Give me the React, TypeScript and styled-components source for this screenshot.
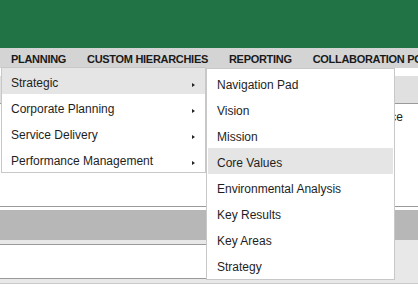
import React from "react";
import styled, { createGlobalStyle } from "styled-components";

const GlobalStyle = createGlobalStyle`
  body {
    margin: 0;
    font-family: "Liberation Sans", Arial, sans-serif;
    color: #1e1e1e;
  }
`;

const Page = styled.div`
  position: relative;
  width: 418px;
  height: 300px;
  overflow: hidden;
  background: #fff;
`;

const Header = styled.header`
  height: 48px;
  background: #217346;
`;

const NavBar = styled.nav`
  display: flex;
  align-items: center;
  height: 20px;
  background: #d4d4d4;
  white-space: nowrap;
`;

const NavItem = styled.span`
  padding: 1px 10px 0 11px;
  font-size: 11px;
  font-weight: bold;
  letter-spacing: -0.3px;
  color: #1a1a1a;
`;

const NavSep = styled.span`
  width: 1px;
  height: 14px;
  background: #333;
`;

const TopGap = styled.div`
  height: 8px;
`;

const GridHeader = styled.div`
  height: 27px;
  background: #e0e0e0;
  border-bottom: 1px solid #9a9a9a;
`;

const DataRow = styled.div`
  display: flex;
  justify-content: flex-end;
  height: 103px;
  padding: 6px 15px 0 0;
  box-sizing: border-box;
  font-size: 12px;
  border-bottom: 1px solid #9a9a9a;
`;

const BandGap = styled.div`
  height: 3px;
`;

const GrayBand = styled.div`
  height: 30px;
  background: #b7b7b7;
`;

const Lower = styled.div`
  display: flex;
  height: 43px;
  background: #e8e8e8;
  border-bottom: 1px solid #cacaca;
`;

const LeftPanel = styled.div`
  width: 367px;
  height: 33px;
  margin-top: 4px;
  background: #fff;
  border-top: 1px solid #9a9a9a;
  border-bottom: 1px solid #9a9a9a;
`;

const Menu = styled.ul<{ $left: number; $top: number; $width: number }>`
  position: absolute;
  left: ${(p) => p.$left}px;
  top: ${(p) => p.$top}px;
  width: ${(p) => p.$width}px;
  margin: 0;
  padding: 0;
  list-style: none;
  background: #fff;
  border: 1px solid #c8c8c8;
  box-sizing: border-box;
`;

const SubMenu = styled(Menu)`
  padding: 1px;
`;

const Item = styled.li<{ $active?: boolean }>`
  display: flex;
  align-items: center;
  justify-content: space-between;
  height: 26px;
  padding: 3px 10px 0 9px;
  box-sizing: border-box;
  font-size: 12px;
  color: #1e1e1e;
  background: ${(p) => (p.$active ? "#e5e5e5" : "transparent")};
  cursor: pointer;
`;

const Arrow = styled.span`
  width: 0;
  height: 0;
  margin-top: 4px;
  border-top: 2.5px solid transparent;
  border-bottom: 2.5px solid transparent;
  border-left: 3px solid #222;
`;

const mainItems = [
  "Strategic",
  "Corporate Planning",
  "Service Delivery",
  "Performance Management",
];

const subItems = [
  "Navigation Pad",
  "Vision",
  "Mission",
  "Core Values",
  "Environmental Analysis",
  "Key Results",
  "Key Areas",
  "Strategy",
];

export default function App() {
  return (
    <Page>
      <GlobalStyle />
      <Header />
      <NavBar>
        <NavItem>PLANNING</NavItem>
        <NavSep />
        <NavItem>CUSTOM HIERARCHIES</NavItem>
        <NavSep />
        <NavItem>REPORTING</NavItem>
        <NavSep />
        <NavItem>COLLABORATION PORTAL</NavItem>
      </NavBar>
      <TopGap />
      <GridHeader />
      <DataRow>Performance</DataRow>
      <BandGap />
      <GrayBand />
      <Lower>
        <LeftPanel />
      </Lower>

      <Menu $left={1} $top={67} $width={205}>
        {mainItems.map((m, i) => (
          <Item key={m} $active={i === 0}>
            {m}
            <Arrow />
          </Item>
        ))}
      </Menu>
      <SubMenu $left={206} $top={68} $width={189}>
        {subItems.map((s) => (
          <Item key={s} $active={s === "Core Values"}>
            {s}
          </Item>
        ))}
      </SubMenu>
    </Page>
  );
}
